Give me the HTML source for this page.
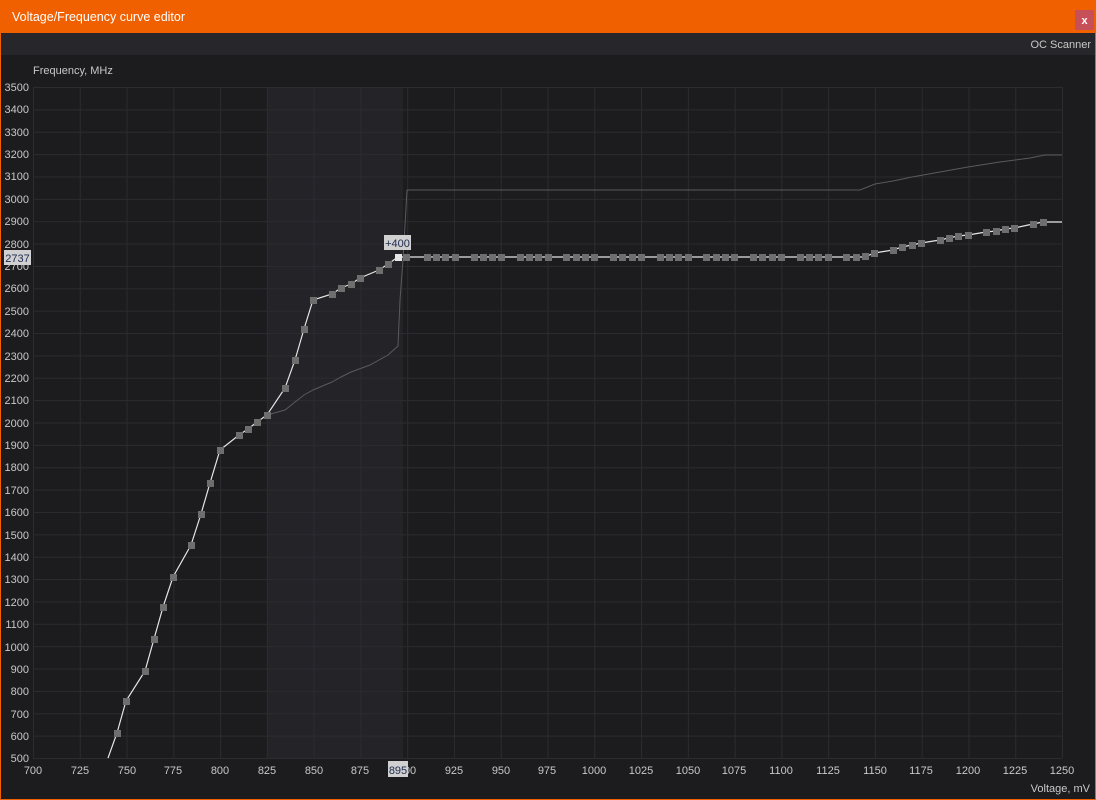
<!DOCTYPE html>
<html><head><meta charset="utf-8"><style>
html,body{margin:0;padding:0;background:#1c1c1f;width:1096px;height:800px;overflow:hidden;font-family:"Liberation Sans",sans-serif}
</style></head><body>
<svg width="1096" height="800" xmlns="http://www.w3.org/2000/svg" font-family="Liberation Sans, sans-serif">
<defs>
<pattern id="g" x="33" y="87" width="46.773" height="22.367" patternUnits="userSpaceOnUse">
<path d="M0.5 0V22.367M0 0.5H46.773" stroke="#2b2b30" stroke-width="1" fill="none"/>
</pattern>
</defs>
<rect width="1096" height="800" fill="#f06000"/>
<rect x="1" y="33" width="1094" height="766" fill="#1c1c1f"/>
<rect x="1" y="33" width="1094" height="22" fill="#27272b"/>
<text x="12" y="21" font-size="12.5" fill="#fff">Voltage/Frequency curve editor</text>
<rect x="1075" y="10" width="19" height="20" fill="#c75058"/>
<text x="1084.5" y="24" font-size="11" font-weight="bold" fill="#fff" text-anchor="middle">x</text>
<text x="1091" y="48" font-size="11" fill="#c8c8c8" text-anchor="end">OC Scanner</text>
<text x="33" y="74" font-size="11" fill="#c8c8c8">Frequency, MHz</text>
<rect x="267" y="87" width="136" height="671" fill="#232328"/>
<rect x="33" y="87" width="1029" height="671" fill="url(#g)"/>
<path d="M1062.5 87V758M33 758.5H1062" stroke="#2b2b30"/>
<g font-size="11" fill="#c8c8c8" text-anchor="end">
<text x="29" y="91">3500</text><text x="29" y="113">3400</text><text x="29" y="136">3300</text><text x="29" y="158">3200</text><text x="29" y="180">3100</text><text x="29" y="203">3000</text><text x="29" y="225">2900</text><text x="29" y="248">2800</text><text x="29" y="270">2700</text><text x="29" y="292">2600</text><text x="29" y="315">2500</text><text x="29" y="337">2400</text><text x="29" y="360">2300</text><text x="29" y="382">2200</text><text x="29" y="404">2100</text><text x="29" y="427">2000</text><text x="29" y="449">1900</text><text x="29" y="471">1800</text><text x="29" y="494">1700</text><text x="29" y="516">1600</text><text x="29" y="539">1500</text><text x="29" y="561">1400</text><text x="29" y="583">1300</text><text x="29" y="606">1200</text><text x="29" y="628">1100</text><text x="29" y="651">1000</text><text x="29" y="673">900</text><text x="29" y="695">800</text><text x="29" y="718">700</text><text x="29" y="740">600</text><text x="29" y="762">500</text>
</g>
<g font-size="11" fill="#c8c8c8" text-anchor="middle">
<text x="33" y="774">700</text><text x="80" y="774">725</text><text x="127" y="774">750</text><text x="173" y="774">775</text><text x="220" y="774">800</text><text x="267" y="774">825</text><text x="314" y="774">850</text><text x="360" y="774">875</text><text x="407" y="774">900</text><text x="454" y="774">925</text><text x="501" y="774">950</text><text x="547" y="774">975</text><text x="594" y="774">1000</text><text x="641" y="774">1025</text><text x="688" y="774">1050</text><text x="734" y="774">1075</text><text x="781" y="774">1100</text><text x="828" y="774">1125</text><text x="875" y="774">1150</text><text x="921" y="774">1175</text><text x="968" y="774">1200</text><text x="1015" y="774">1225</text><text x="1062" y="774">1250</text>
</g>
<text x="1090" y="792" font-size="11" fill="#c8c8c8" text-anchor="end">Voltage, mV</text>
<polyline fill="none" stroke="#5a5a5e" stroke-width="1" points="267,415 285,410 295,402 304,395 313,390 332,382 341,377 351,372 370,365 388,355 398,346 400,300 403,260 407,190 860,190 875,184 893,181 912,177 940,172 968,167 1000,162 1030,158 1045,155 1062,155"/>
<polyline fill="none" stroke="#e6e6e6" stroke-width="1.2" points="108,758 117,733 126,701 145,671 154,639 163,607 173,577 191,545 201,514 210,483 220,450 239,435 248,429 257,422 267,415 285,388 295,360 304,329 313,300 332,294 341,288 351,284 360,278 379,270 388,264 398,257 865,257 874,253 893,250 902,247 912,245 921,243 940,240 949,238 958,236 968,235 986,232 996,231 1005,229 1014,228 1033,224 1043,222 1062,222"/>
<g fill="#6e6e6e">
<rect x="114" y="730" width="7" height="7"/><rect x="123" y="698" width="7" height="7"/><rect x="142" y="668" width="7" height="7"/><rect x="151" y="636" width="7" height="7"/><rect x="160" y="604" width="7" height="7"/><rect x="170" y="574" width="7" height="7"/><rect x="188" y="542" width="7" height="7"/><rect x="198" y="511" width="7" height="7"/><rect x="207" y="480" width="7" height="7"/><rect x="217" y="447" width="7" height="7"/><rect x="236" y="432" width="7" height="7"/><rect x="245" y="426" width="7" height="7"/><rect x="254" y="419" width="7" height="7"/><rect x="264" y="412" width="7" height="7"/><rect x="282" y="385" width="7" height="7"/><rect x="292" y="357" width="7" height="7"/><rect x="301" y="326" width="7" height="7"/><rect x="310" y="297" width="7" height="7"/><rect x="329" y="291" width="7" height="7"/><rect x="338" y="285" width="7" height="7"/><rect x="348" y="281" width="7" height="7"/><rect x="357" y="275" width="7" height="7"/><rect x="376" y="267" width="7" height="7"/><rect x="385" y="261" width="7" height="7"/>
<rect x="403" y="254" width="7" height="7"/><rect x="424" y="254" width="7" height="7"/><rect x="433" y="254" width="7" height="7"/><rect x="442" y="254" width="7" height="7"/><rect x="452" y="254" width="7" height="7"/><rect x="471" y="254" width="7" height="7"/><rect x="480" y="254" width="7" height="7"/><rect x="489" y="254" width="7" height="7"/><rect x="498" y="254" width="7" height="7"/><rect x="517" y="254" width="7" height="7"/><rect x="526" y="254" width="7" height="7"/><rect x="535" y="254" width="7" height="7"/><rect x="545" y="254" width="7" height="7"/><rect x="563" y="254" width="7" height="7"/><rect x="573" y="254" width="7" height="7"/><rect x="582" y="254" width="7" height="7"/><rect x="591" y="254" width="7" height="7"/><rect x="610" y="254" width="7" height="7"/><rect x="619" y="254" width="7" height="7"/><rect x="629" y="254" width="7" height="7"/><rect x="638" y="254" width="7" height="7"/><rect x="657" y="254" width="7" height="7"/><rect x="666" y="254" width="7" height="7"/><rect x="675" y="254" width="7" height="7"/><rect x="685" y="254" width="7" height="7"/><rect x="703" y="254" width="7" height="7"/><rect x="713" y="254" width="7" height="7"/><rect x="722" y="254" width="7" height="7"/><rect x="731" y="254" width="7" height="7"/><rect x="750" y="254" width="7" height="7"/><rect x="759" y="254" width="7" height="7"/><rect x="769" y="254" width="7" height="7"/><rect x="778" y="254" width="7" height="7"/><rect x="797" y="254" width="7" height="7"/><rect x="806" y="254" width="7" height="7"/><rect x="815" y="254" width="7" height="7"/><rect x="825" y="254" width="7" height="7"/><rect x="843" y="254" width="7" height="7"/><rect x="853" y="254" width="7" height="7"/><rect x="862" y="253" width="7" height="7"/>
<rect x="871" y="250" width="7" height="7"/><rect x="890" y="247" width="7" height="7"/><rect x="899" y="244" width="7" height="7"/><rect x="909" y="242" width="7" height="7"/><rect x="918" y="240" width="7" height="7"/><rect x="937" y="237" width="7" height="7"/><rect x="946" y="235" width="7" height="7"/><rect x="955" y="233" width="7" height="7"/><rect x="965" y="232" width="7" height="7"/><rect x="983" y="229" width="7" height="7"/><rect x="993" y="228" width="7" height="7"/><rect x="1002" y="226" width="7" height="7"/><rect x="1011" y="225" width="7" height="7"/><rect x="1030" y="221" width="7" height="7"/><rect x="1040" y="219" width="7" height="7"/>
</g>
<rect x="395" y="254" width="7" height="7" fill="#e6e6e6"/>
<rect x="384" y="235" width="27" height="15" fill="#d0d0d0"/>
<text x="397.5" y="247" font-size="11" fill="#1e2a50" text-anchor="middle">+400</text>
<rect x="4" y="250" width="27" height="15" fill="#d0d0d0"/>
<text x="17.5" y="262" font-size="11" fill="#1e2a50" text-anchor="middle">2737</text>
<rect x="388" y="761" width="20" height="16" fill="#d0d0d0"/>
<text x="398" y="774" font-size="11" fill="#1e2a50" text-anchor="middle">895</text>
</svg>
</body></html>
